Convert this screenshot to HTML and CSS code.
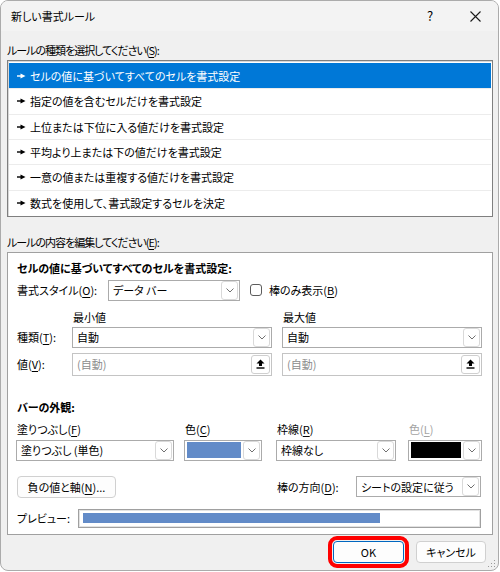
FILE: index.html
```html
<!DOCTYPE html>
<html lang="ja">
<head>
    <meta charset="UTF-8">
    <title>新しい書式ルール</title>
    <link rel="stylesheet" href="styles.css">
</head>
<body>
<div class="window">
    <div class="titlebar">
        <div class="title">新しい書式ルール</div>
        <div class="help">?</div>
        <div class="close">
            <svg width="11" height="11" viewBox="0 0 11 11"><path d="M0.5 0.5 L10.5 10.5 M10.5 0.5 L0.5 10.5" stroke="#1a1a1a" stroke-width="1.1"/></svg>
        </div>
    </div>

    <div class="content">
        <div class="label">ルールの種類を選択してください(<u>S</u>):</div>
        <div class="rule-list">
            <div class="rule selected"><svg class="mark" width="9" height="6" viewBox="0 0 9 6"><rect x="0" y="2.3" width="5" height="1.4"/><path d="M3.5 0.5 L8.5 3 L3.5 5.5Z"/></svg>セルの値に基づいてすべてのセルを書式設定</div>
            <div class="rule"><svg class="mark" width="9" height="6" viewBox="0 0 9 6"><rect x="0" y="2.3" width="5" height="1.4"/><path d="M3.5 0.5 L8.5 3 L3.5 5.5Z"/></svg>指定の値を含むセルだけを書式設定</div>
            <div class="rule"><svg class="mark" width="9" height="6" viewBox="0 0 9 6"><rect x="0" y="2.3" width="5" height="1.4"/><path d="M3.5 0.5 L8.5 3 L3.5 5.5Z"/></svg>上位または下位に入る値だけを書式設定</div>
            <div class="rule"><svg class="mark" width="9" height="6" viewBox="0 0 9 6"><rect x="0" y="2.3" width="5" height="1.4"/><path d="M3.5 0.5 L8.5 3 L3.5 5.5Z"/></svg>平均より上または下の値だけを書式設定</div>
            <div class="rule"><svg class="mark" width="9" height="6" viewBox="0 0 9 6"><rect x="0" y="2.3" width="5" height="1.4"/><path d="M3.5 0.5 L8.5 3 L3.5 5.5Z"/></svg>一意の値または重複する値だけを書式設定</div>
            <div class="rule"><svg class="mark" width="9" height="6" viewBox="0 0 9 6"><rect x="0" y="2.3" width="5" height="1.4"/><path d="M3.5 0.5 L8.5 3 L3.5 5.5Z"/></svg>数式を使用して、書式設定するセルを決定</div>
        </div>

        <div class="label label-edit">ルールの内容を編集してください(<u>E</u>):</div>
        <div class="panel">
            <div class="bold">セルの値に基づいてすべてのセルを書式設定:</div>

            <div class="row row-style">
                <div class="lbl-style">書式スタイル(<u>O</u>):</div>
                <div class="select w-style">
                    <span class="val">データ バー</span>
                    <span class="arrow"><svg width="8" height="5" viewBox="0 0 8 5"><path d="M0.5 0.5 L4 4 L7.5 0.5" fill="none" stroke="#707070"/></svg></span>
                </div>
                <span class="checkbox"></span>
                <span>棒のみ表示(<u>B</u>)</span>
            </div>

            <div class="mm mm-head">
                <div></div>
                <div class="hd">最小値</div>
                <div class="hd">最大値</div>
            </div>
            <div class="mm mm-type">
                <div>種類(<u>T</u>):</div>
                <div class="select">
                    <span class="val">自動</span>
                    <span class="arrow"><svg width="8" height="5" viewBox="0 0 8 5"><path d="M0.5 0.5 L4 4 L7.5 0.5" fill="none" stroke="#707070"/></svg></span>
                </div>
                <div class="select">
                    <span class="val">自動</span>
                    <span class="arrow"><svg width="8" height="5" viewBox="0 0 8 5"><path d="M0.5 0.5 L4 4 L7.5 0.5" fill="none" stroke="#707070"/></svg></span>
                </div>
            </div>
            <div class="mm mm-value">
                <div>値(<u>V</u>):</div>
                <div class="input">
                    <span class="val">(自動)</span>
                    <span class="upload"><svg width="9" height="10" viewBox="0 0 9 10"><path d="M4.5 0.5 L8.5 4.5 H6 V7 H3 V4.5 H0.5 Z"/><rect x="0.5" y="8.3" width="8" height="1.4"/></svg></span>
                </div>
                <div class="input">
                    <span class="val">(自動)</span>
                    <span class="upload"><svg width="9" height="10" viewBox="0 0 9 10"><path d="M4.5 0.5 L8.5 4.5 H6 V7 H3 V4.5 H0.5 Z"/><rect x="0.5" y="8.3" width="8" height="1.4"/></svg></span>
                </div>
            </div>

            <div class="bold bar-title">バーの外観:</div>
            <div class="appear">
                <div>塗りつぶし(<u>F</u>)</div>
                <div>色(<u>C</u>)</div>
                <div>枠線(<u>R</u>)</div>
                <div class="disabled">色(<u>L</u>)</div>

                <div class="select w-fill">
                    <span class="val">塗りつぶし (単色)</span>
                    <span class="arrow"><svg width="8" height="5" viewBox="0 0 8 5"><path d="M0.5 0.5 L4 4 L7.5 0.5" fill="none" stroke="#707070"/></svg></span>
                </div>
                <div class="select color w-color">
                    <span class="swatch blue"></span>
                    <span class="arrow"><svg width="8" height="5" viewBox="0 0 8 5"><path d="M0.5 0.5 L4 4 L7.5 0.5" fill="none" stroke="#707070"/></svg></span>
                </div>
                <div class="select w-border">
                    <span class="val">枠線なし</span>
                    <span class="arrow"><svg width="8" height="5" viewBox="0 0 8 5"><path d="M0.5 0.5 L4 4 L7.5 0.5" fill="none" stroke="#707070"/></svg></span>
                </div>
                <div class="select color w-color2">
                    <span class="swatch black"></span>
                    <span class="arrow"><svg width="8" height="5" viewBox="0 0 8 5"><path d="M0.5 0.5 L4 4 L7.5 0.5" fill="none" stroke="#707070"/></svg></span>
                </div>
            </div>

            <div class="row row-axis">
                <div class="btn btn-axis">負の値と軸(<u>N</u>)...</div>
                <div class="lbl-dir">棒の方向(<u>D</u>):</div>
                <div class="select w-dir">
                    <span class="val">シートの設定に従う</span>
                    <span class="arrow"><svg width="8" height="5" viewBox="0 0 8 5"><path d="M0.5 0.5 L4 4 L7.5 0.5" fill="none" stroke="#707070"/></svg></span>
                </div>
            </div>

            <div class="row row-preview">
                <div class="lbl-preview">プレビュー:</div>
                <div class="preview"><div class="preview-bar" style="width:297px"></div></div>
            </div>
        </div>

        <div class="footer">
            <div class="btn btn-ok">OK</div>
            <div class="btn btn-cancel">キャンセル</div>
        </div>
    </div>

    <svg class="grip" width="8" height="8" viewBox="0 0 8 8" fill="#9a9a9a">
        <rect x="6" y="0" width="1" height="1"/><rect x="3" y="3" width="1" height="1"/><rect x="6" y="3" width="1" height="1"/>
        <rect x="0" y="6" width="1" height="1"/><rect x="3" y="6" width="1" height="1"/><rect x="6" y="6" width="1" height="1"/>
    </svg>
</div>
</body>
</html>
```

FILE: styles.css
```css
* { box-sizing: border-box; }
html, body {
    margin: 0;
    background: #ffffff;
}
body {
    font-family: "Noto Sans CJK JP", "Noto Sans", sans-serif;
    font-size: 11px;
    line-height: 16px;
    color: #000;
    font-feature-settings: "palt";
}
u { text-underline-offset: 2px; }

.window {
    position: relative;
    width: 499px;
    height: 571px;
    background: #f0f0f0;
    border: 1px solid #ababab;
    border-radius: 8px;
    overflow: hidden;
}

/* title bar */
.titlebar {
    height: 30px;
    display: flex;
    align-items: center;
    padding-left: 10px;
    background: #f3f3f3;
}
.titlebar .title { flex: 1; }
.titlebar .help {
    width: 24px;
    text-align: center;
    margin-right: 10px;
    font-size: 13px;
}
.titlebar .close {
    width: 46px;
    display: flex;
    justify-content: center;
}

.content { padding: 11px 6px 0 6px; }

.label {
    height: 16px;
    letter-spacing: -1px;
}
.label-edit { margin-top: 17px; }

/* rule list */
.rule-list {
    margin-top: 2px;
    width: 486px;
    background: #fff;
    border: 1px solid #7f7f7f;
    box-shadow: inset 1px 1px 0 #d8d8d8;
    padding: 2px 1px 1px 1px;
}
.rule {
    height: 25.33px;
    display: flex;
    align-items: center;
    border-top: 1px solid #ececec;
}
.rule:first-child { border-top: none; }
.rule .mark {
    margin: 0 4px 0 8px;
    fill: #000;
}
.rule.selected {
    background: #0078d7;
    color: #fff;
}
.rule.selected .mark { fill: #fff; }

/* edit panel */
.panel {
    margin-top: 2px;
    width: 486px;
    background: #fff;
    border: 1px solid #a0a0a0;
    padding: 7px 10px 6px 9px;
}
.bold { font-weight: bold; height: 16px; }

.row {
    display: flex;
    align-items: center;
}
.row-style { margin-top: 4px; }
.lbl-style { width: 91px; }
.w-style { width: 132px; }

.select {
    display: flex;
    align-items: center;
    height: 21px;
    background: #fff;
    border: 1px solid #ababab;
    padding-left: 4px;
}
.select .val {
    flex: 1;
    white-space: nowrap;
}
.select .arrow {
    width: 17px;
    height: 19px;
    margin-right: 1px;
    border: 1px solid #d9d9d9;
    border-radius: 3px;
    display: flex;
    align-items: center;
    justify-content: center;
    background: #fff;
}
.checkbox {
    width: 12px;
    height: 12px;
    margin: 0 7px 0 10px;
    border: 1px solid #5c5c5c;
    border-radius: 3px;
    background: #fff;
}

/* min / max */
.mm {
    display: grid;
    grid-template-columns: 45px 200px 200px;
    column-gap: 10px;
    align-items: center;
}
.mm-head { margin-top: 8px; height: 16px; }
.mm-head .hd { padding-left: 1px; }
.mm-type { margin-top: 2px; }
.mm-value { margin-top: 5px; }
.input {
    display: flex;
    align-items: center;
    height: 23px;
    border: 1px solid #c4c4c4;
    padding-left: 4px;
    color: #8c8c8c;
}
.input .val { flex: 1; }
.upload {
    width: 19px;
    height: 19px;
    margin-right: 1px;
    border: 1px solid #cfcfcf;
    border-radius: 3px;
    display: flex;
    align-items: center;
    justify-content: center;
    fill: #000;
}

/* appearance */
.bar-title { margin-top: 23px; }
.appear {
    margin-top: 6px;
    display: grid;
    grid-template-columns: 168px 92px 132px 74px;
    row-gap: 3px;
    margin-left: -1px;
}
.appear > div:nth-child(-n+4) { padding-left: 1px; height: 16px; }
.disabled { color: #a3a3a3; }
.w-fill { width: 158px; }
.w-color { width: 78px; }
.w-border { width: 120px; }
.w-color2 { width: 74px; }
.select.color { padding-left: 2px; }
.swatch {
    flex: 1;
    height: 16px;
    margin-right: 2px;
}
.swatch.blue { background: #628bc8; }
.swatch.black { background: #000; }

.row-axis { margin-top: 15px; }
.btn {
    height: 22px;
    display: flex;
    align-items: center;
    justify-content: center;
    background: #fdfdfd;
    border: 1px solid #d0d0d0;
    border-radius: 4px;
}
.btn-axis { width: 99px; }
.lbl-dir { margin-left: 161px; width: 79px; }
.w-dir { width: 125px; }

.row-preview { margin-top: 11px; }
.lbl-preview { width: 61px; }
.preview {
    width: 403px;
    height: 19px;
    border: 1px solid #a0a0a0;
    box-shadow: inset 1px 1px 0 #e2e2e2, inset -1px -1px 0 #e2e2e2;
    padding: 3px 4px;
}
.preview-bar {
    height: 10px;
    background: #628bc8;
}

/* dialog buttons */
.footer {
    margin-top: 6px;
    display: flex;
    justify-content: flex-end;
    gap: 12px;
    padding-right: 6px;
}
.btn-ok {
    width: 71px;
    border-color: #0067c0;
    outline: 4px solid #ff0000;
    outline-offset: 1px;
}
.btn-cancel { width: 70px; }

.grip {
    position: absolute;
    right: 2px;
    bottom: 2px;
}
```
